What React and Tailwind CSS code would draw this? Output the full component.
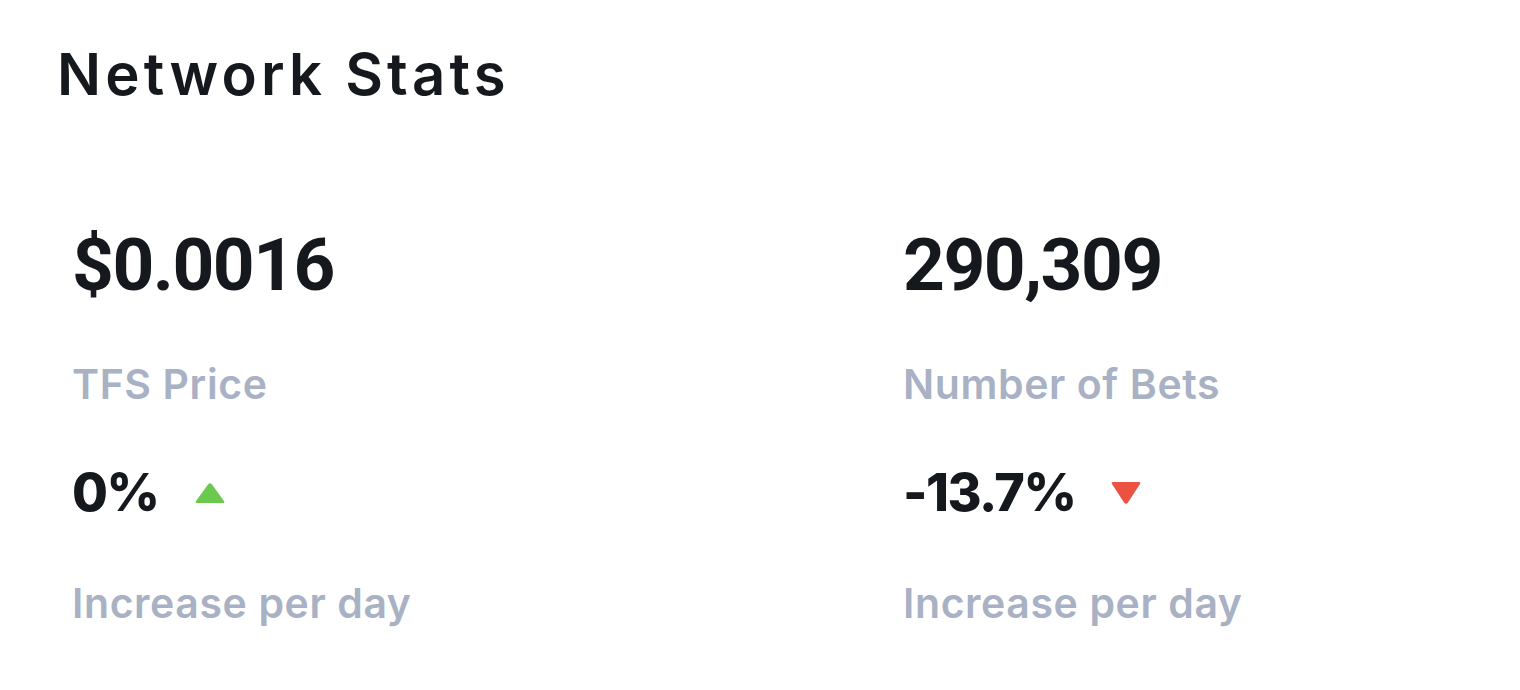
const stats = [
    { value: '$0.0016', label: 'TFS Price', change: '0%', up: true },
    { value: '290,309', label: 'Number of Bets', change: '-13.7%', up: false },
]

function Triangle({ up }) {
    return up ? (
        <svg className="h-[22px] w-[30px]" viewBox="0 0 30 22">
            <path d="M13 2.5 Q15 0 17 2.5 L29 19 Q30 21 28 21 L2 21 Q0 21 1 19 Z" fill="#6cc94f" />
        </svg>
    ) : (
        <svg className="h-[24px] w-[30px]" viewBox="0 0 30 24">
            <path d="M13 21.5 Q15 24 17 21.5 L29 3 Q30 1 28 1 L2 1 Q0 1 1 3 Z" fill="#ec5242" />
        </svg>
    )
}

export default function App() {
    return (
        <div className="min-h-[690px] w-[1520px] bg-white pl-[57px] pt-[38px]" style={{ fontFamily: 'Inter, "Noto Sans", sans-serif' }}>
            <h2 className="text-[58px] font-semibold leading-[72px] tracking-[4.2px] text-[#15181d]">Network Stats</h2>
            <div className="mt-[116px] grid grid-cols-[831px_1fr] pl-[15px]">
                {stats.map((s) => (
                    <div key={s.label} className="flex flex-col">
                        <div className="font-['Roboto',sans-serif] text-[73px] font-bold leading-[78px] tracking-[-1.5px] text-[#15181d]">{s.value}</div>
                        <div className="mt-[55px] text-[41px] font-semibold leading-[50px] tracking-[0.6px] text-[#a9b1c4]">{s.label}</div>
                        <div className="mt-[54px] flex items-center gap-[36px]">
                            <span className="text-[52px] font-extrabold leading-[60px] tracking-[-1.5px] text-[#15181d]">{s.change}</span>
                            <Triangle up={s.up} />
                        </div>
                        <div className="mt-[55px] text-[41px] font-semibold leading-[50px] tracking-[0.6px] text-[#a9b1c4]">Increase per day</div>
                    </div>
                ))}
            </div>
        </div>
    )
}
